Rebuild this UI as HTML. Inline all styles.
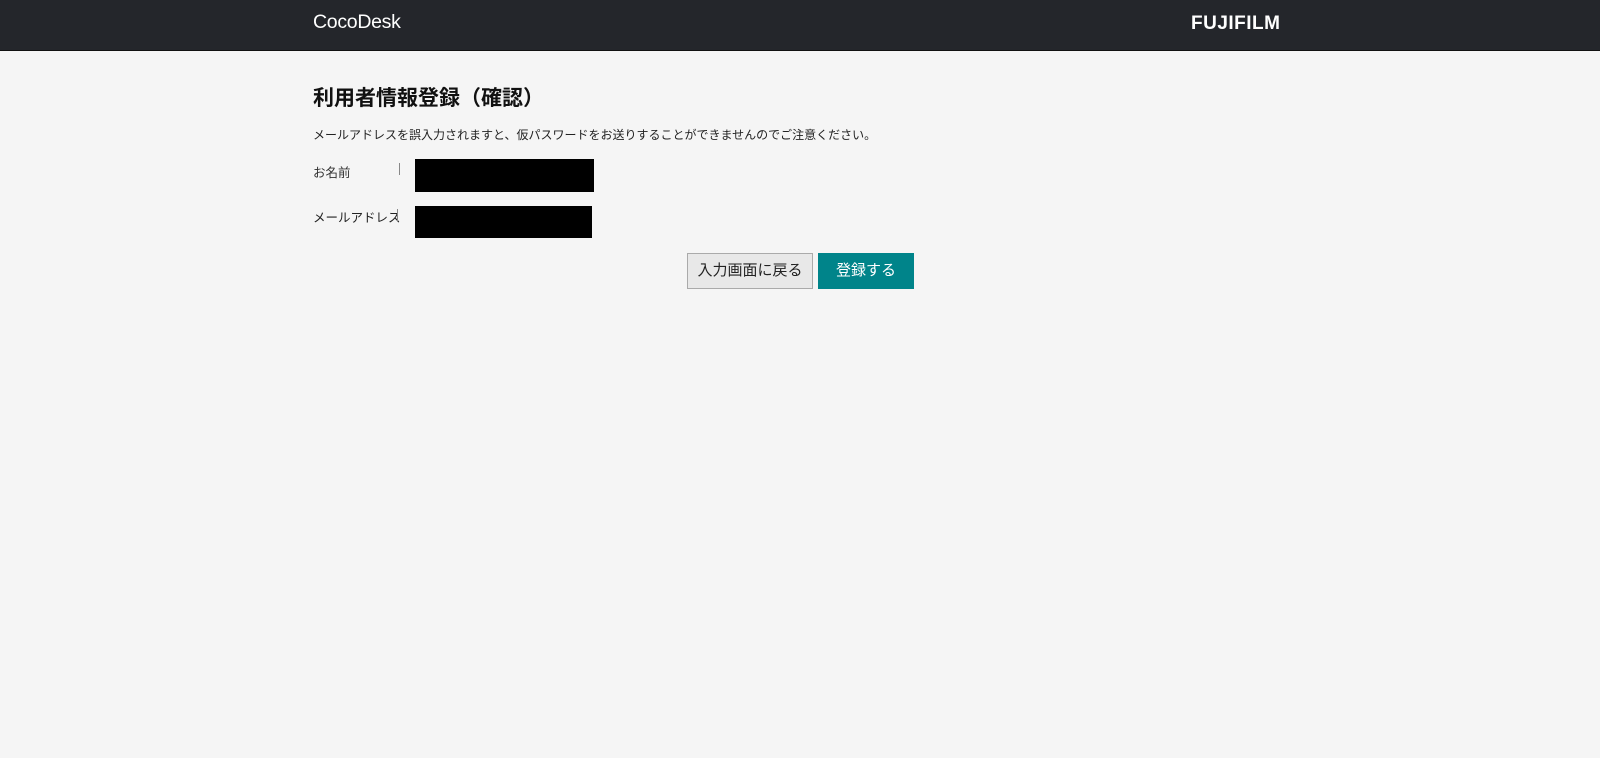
<!DOCTYPE html>
<html><head><meta charset="utf-8"><style>
body{margin:0;width:1600px;height:758px;background:#f5f5f5;font-family:"Liberation Sans","Noto Sans CJK JP",sans-serif;color:#222;position:relative;overflow:hidden}
.hd{position:absolute;left:0;top:0;width:1600px;height:50px;background:#24262b;border-bottom:1px solid #111}
.a{position:absolute;white-space:nowrap}
</style></head><body>
<div class="hd"></div>
<div class="a" style="left:313px;top:11px;font-size:19.5px;color:#fff;letter-spacing:-0.3px">CocoDesk</div>
<div class="a" style="left:1191px;top:13px;font-size:19px;font-weight:bold;color:#fff;letter-spacing:0.5px">FUJIFILM</div>
<div class="a" style="left:313px;top:82px;font-size:21px;font-weight:bold;color:#111">利用者情報登録（確認）</div>
<div class="a" style="left:313px;top:126px;font-size:12px;color:#222">メールアドレスを誤入力されますと、仮パスワードをお送りすることができませんのでご注意ください。</div>
<div class="a" style="left:313px;top:162px;font-size:12.5px;color:#333">お名前</div>
<div class="a" style="left:399px;top:163px;width:1px;height:12px;background:#888"></div>
<div class="a" style="left:415px;top:159px;width:179px;height:33px;background:#000"></div>
<div class="a" style="left:313px;top:207px;font-size:12.5px;color:#222">メールアドレス</div>
<div class="a" style="left:397px;top:209px;width:1px;height:12px;background:#888"></div>
<div class="a" style="left:415px;top:206px;width:177px;height:32px;background:#000"></div>
<div class="a" style="left:687px;top:253px;width:126px;height:36px;box-sizing:border-box;border:1px solid #aaa;background:#e8e8e8;font-size:15px;line-height:34px;text-align:center;color:#222">入力画面に戻る</div>
<div class="a" style="left:818px;top:253px;width:96px;height:36px;background:#00848a;color:#fff;font-size:15px;line-height:36px;text-align:center">登録する</div>
</body></html>
